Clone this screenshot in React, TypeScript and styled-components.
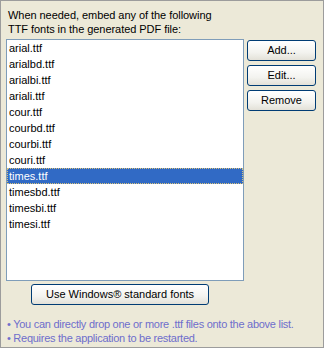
import React from "react";
import styled, { createGlobalStyle } from "styled-components";

const Global = createGlobalStyle`
  html, body { margin: 0; padding: 0; background: #ECE9D8; }
  * { box-sizing: border-box; }
`;

const Panel = styled.div`
  width: 324px;
  height: 348px;
  border: 1px solid #9c9c9c;
  background: #ECE9D8;
  padding: 7px 5px 0 5px;
  font-family: "Liberation Sans", Arial, sans-serif;
  font-size: 11px;
  color: #000;
  display: flex;
  flex-direction: column;
`;

const Header = styled.div`
  line-height: 14px;
  padding-left: 2px;
  margin-bottom: 3px;
  white-space: nowrap;
  letter-spacing: -0.05px;
`;

const Main = styled.div`
  display: grid;
  grid-template-columns: 238px 69px;
  column-gap: 3px;
  align-items: start;
`;

const ListBox = styled.div`
  height: 242px;
  border: 1px solid #7F9DB9;
  background: #fff;
  display: flex;
  flex-direction: column;
`;

const Item = styled.div<{ $selected?: boolean }>`
  height: 16px;
  line-height: 16px;
  padding-left: 2px;
  white-space: nowrap;
  background: ${(p) => (p.$selected ? "#316AC5" : "transparent")};
  color: ${(p) => (p.$selected ? "#fff" : "#000")};
  outline: ${(p) => (p.$selected ? "1px dotted #D9C27A" : "none")};
  outline-offset: -1px;
`;

const Buttons = styled.div`
  display: flex;
  flex-direction: column;
  gap: 4px;
  padding-top: 1px;
`;

const Button = styled.button<{ $width?: number }>`
  width: ${(p) => (p.$width ? `${p.$width}px` : "100%")};
  height: 21px;
  border: 1px solid #003C74;
  border-radius: 3px;
  background: linear-gradient(#FFFFFF, #F3F3EF 60%, #E3E1D8);
  font-family: inherit;
  font-size: 11px;
  color: #000;
  padding: 0;
  margin: 0;
  line-height: 19px;
`;

const BottomRow = styled.div`
  padding-left: 25px;
  margin-top: 3px;
`;

const Notes = styled.div`
  margin-top: 12px;
  color: #6E6ECC;
  line-height: 14px;
  padding-left: 1px;
  white-space: nowrap;
  letter-spacing: -0.27px;
`;

const fonts = [
  "arial.ttf",
  "arialbd.ttf",
  "arialbi.ttf",
  "ariali.ttf",
  "cour.ttf",
  "courbd.ttf",
  "courbi.ttf",
  "couri.ttf",
  "times.ttf",
  "timesbd.ttf",
  "timesbi.ttf",
  "timesi.ttf",
];

export default function App() {
  return (
    <>
      <Global />
      <Panel>
        <Header>
          When needed, embed any of the following
          <br />
          TTF fonts in the generated PDF file:
        </Header>
        <Main>
          <ListBox>
            {fonts.map((f) => (
              <Item key={f} $selected={f === "times.ttf"}>
                {f}
              </Item>
            ))}
          </ListBox>
          <Buttons>
            <Button>Add...</Button>
            <Button>Edit...</Button>
            <Button>Remove</Button>
          </Buttons>
        </Main>
        <BottomRow>
          <Button $width={178}>Use Windows® standard fonts</Button>
        </BottomRow>
        <Notes>
          <div>• You can directly drop one or more .ttf files onto the above list.</div>
          <div>• Requires the application to be restarted.</div>
        </Notes>
      </Panel>
    </>
  );
}
